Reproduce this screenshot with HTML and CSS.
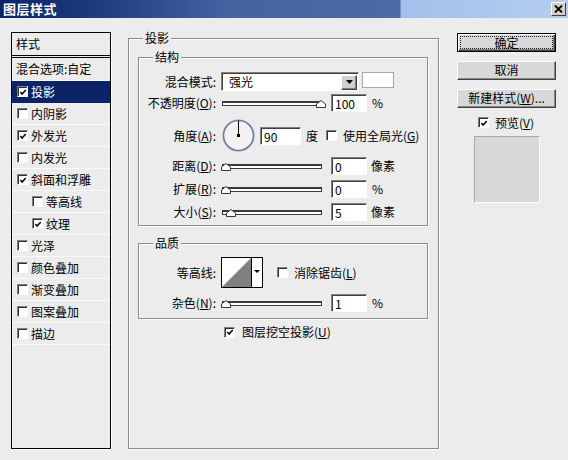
FILE: index.html
```html
<!DOCTYPE html>
<html>
<head>
<meta charset="utf-8">
<title>图层样式</title>
<link rel="stylesheet" href="styles.css">
</head>
<body>
<div class="window">
  <div class="titlebar">
    <span class="title">图层样式</span>
    <span class="close"><svg width="9" height="8" viewBox="0 0 9 8"><path d="M1 0.5 L8 7.5 M8 0.5 L1 7.5" stroke="#000" stroke-width="1.8"/></svg></span>
  </div>
  <div class="dialog">
    <div class="styles-panel">
      <div class="sp-head">样式</div>
      <div class="sp-row plain">混合选项:自定</div>
      <div class="sp-row selected"><span class="cb checked"><svg width="9" height="9" viewBox="0 0 9 9"><path d="M1.5 4 L3.5 6.2 L7.6 1.8" fill="none" stroke="#000" stroke-width="1.7"/></svg></span>投影</div>
      <div class="sp-row"><span class="cb"></span>内阴影</div>
      <div class="sp-row"><span class="cb checked"><svg width="9" height="9" viewBox="0 0 9 9"><path d="M1.5 4 L3.5 6.2 L7.6 1.8" fill="none" stroke="#000" stroke-width="1.7"/></svg></span>外发光</div>
      <div class="sp-row"><span class="cb"></span>内发光</div>
      <div class="sp-row"><span class="cb checked"><svg width="9" height="9" viewBox="0 0 9 9"><path d="M1.5 4 L3.5 6.2 L7.6 1.8" fill="none" stroke="#000" stroke-width="1.7"/></svg></span>斜面和浮雕</div>
      <div class="sp-row sub"><span class="cb"></span>等高线</div>
      <div class="sp-row sub"><span class="cb checked"><svg width="9" height="9" viewBox="0 0 9 9"><path d="M1.5 4 L3.5 6.2 L7.6 1.8" fill="none" stroke="#000" stroke-width="1.7"/></svg></span>纹理</div>
      <div class="sp-row"><span class="cb"></span>光泽</div>
      <div class="sp-row"><span class="cb"></span>颜色叠加</div>
      <div class="sp-row"><span class="cb"></span>渐变叠加</div>
      <div class="sp-row"><span class="cb"></span>图案叠加</div>
      <div class="sp-row"><span class="cb"></span>描边</div>
    </div>

    <div class="main group">
      <div class="legend outer-legend">投影</div>

      <div class="group inner">
        <div class="legend">结构</div>
        <div class="row r-blend">
          <span class="label">混合模式:</span>
          <span class="select"><span class="sel-text">强光</span><span class="drop"><svg width="7" height="4" viewBox="0 0 7 4"><path d="M0 0 H7 L3.5 4 Z" fill="#000"/></svg></span></span>
          <span class="swatch"></span>
        </div>
        <div class="row r-gap3">
          <span class="label">不透明度(<u>O</u>):</span>
          <span class="slider"><span class="track"><span class="thumb at-end"><svg width="10" height="8" viewBox="0 0 10 8"><path d="M0.5 7.5 V4 L5 0.5 L9.5 4 V7.5 Z" fill="#fff" stroke="#333"/></svg></span></span></span>
          <span class="field">100</span>
          <span class="unit">%</span>
        </div>
        <div class="row r-angle">
          <span class="label">角度(<u>A</u>):</span>
          <span class="dial"><svg width="35" height="35" viewBox="0 0 35 35"><circle cx="17.5" cy="17.5" r="16" fill="#eef0f2" stroke="#c8d0da" stroke-width="1"/><circle cx="17.5" cy="17.5" r="15" fill="#f2f2f2" stroke="#6f8096" stroke-width="1.6"/><line x1="17.5" y1="17.5" x2="17.5" y2="2.5" stroke="#000" stroke-width="1"/><rect x="16" y="16" width="3" height="3" fill="#000"/></svg></span>
          <span class="field angle-field">90</span>
          <span class="unit">度</span>
          <span class="cb global-cb"></span>
          <span class="cb-text">使用全局光(<u>G</u>)</span>
        </div>
        <div class="row r-gap4">
          <span class="label">距离(<u>D</u>):</span>
          <span class="slider"><span class="track"><span class="thumb at-start"><svg width="10" height="8" viewBox="0 0 10 8"><path d="M0.5 7.5 V4 L5 0.5 L9.5 4 V7.5 Z" fill="#fff" stroke="#333"/></svg></span></span></span>
          <span class="field">0</span>
          <span class="unit unit-px">像素</span>
        </div>
        <div class="row r-gap5">
          <span class="label">扩展(<u>R</u>):</span>
          <span class="slider"><span class="track"><span class="thumb at-start"><svg width="10" height="8" viewBox="0 0 10 8"><path d="M0.5 7.5 V4 L5 0.5 L9.5 4 V7.5 Z" fill="#fff" stroke="#333"/></svg></span></span></span>
          <span class="field">0</span>
          <span class="unit">%</span>
        </div>
        <div class="row r-gap5">
          <span class="label">大小(<u>S</u>):</span>
          <span class="slider"><span class="track"><span class="thumb at-small"><svg width="10" height="8" viewBox="0 0 10 8"><path d="M0.5 7.5 V4 L5 0.5 L9.5 4 V7.5 Z" fill="#fff" stroke="#333"/></svg></span></span></span>
          <span class="field">5</span>
          <span class="unit unit-px">像素</span>
        </div>
      </div>

      <div class="group quality">
        <div class="legend q-legend">品质</div>
        <div class="row r-contour">
          <span class="label">等高线:</span>
          <span class="contour"><svg width="42" height="31" viewBox="0 0 42 31"><rect x="0.5" y="0.5" width="41" height="30" fill="#fff" stroke="#000"/><polygon points="1,30 30,1 30,30" fill="#808080"/><line x1="30.5" y1="1" x2="30.5" y2="30" stroke="#000"/><path d="M33 13 H39 L36 16 Z" fill="#000"/></svg></span>
          <span class="cb aa-cb"></span>
          <span class="cb-text">消除锯齿(<u>L</u>)</span>
        </div>
        <div class="row r-gap6">
          <span class="label">杂色(<u>N</u>):</span>
          <span class="slider"><span class="track"><span class="thumb at-start"><svg width="10" height="8" viewBox="0 0 10 8"><path d="M0.5 7.5 V4 L5 0.5 L9.5 4 V7.5 Z" fill="#fff" stroke="#333"/></svg></span></span></span>
          <span class="field">1</span>
          <span class="unit">%</span>
        </div>
      </div>

      <div class="knockout">
        <span class="cb checked"><svg width="9" height="9" viewBox="0 0 9 9"><path d="M1.5 4 L3.5 6.2 L7.6 1.8" fill="none" stroke="#000" stroke-width="1.7"/></svg></span>
        <span class="cb-text">图层挖空投影(<u>U</u>)</span>
      </div>
    </div>

    <div class="side">
      <div class="btn default"><span class="focus">确定</span></div>
      <div class="btn">取消</div>
      <div class="btn">新建样式(<u>W</u>)...</div>
      <div class="preview-row">
        <span class="cb checked"><svg width="9" height="9" viewBox="0 0 9 9"><path d="M1.5 4 L3.5 6.2 L7.6 1.8" fill="none" stroke="#000" stroke-width="1.7"/></svg></span>
        <span class="cb-text">预览(<u>V</u>)</span>
      </div>
      <div class="preview"></div>
    </div>
  </div>
</div>
</body>
</html>
```

FILE: styles.css
```css
* { box-sizing: border-box; }
body {
  margin: 0;
  background: #ececec;
  font: 12px/14px "Noto Sans CJK SC", "Noto Sans", sans-serif;
  color: #000;
}
u { text-decoration: underline; text-underline-offset: 1px; }
.window { width: 568px; height: 460px; overflow: hidden; }

.titlebar {
  height: 18px;
  display: flex;
  align-items: center;
  justify-content: space-between;
  padding: 0 2px 0 3px;
  background: linear-gradient(to right, #0a2466 0px, #1e3a7c 90px, #4464a2 230px, #4b6ba6 400px, #a2c0ea 401px, #b4cef0 568px);
}
.title { color: #fff; font-weight: bold; font-size: 13px; letter-spacing: 0.5px; }
.close {
  width: 15px; height: 14px;
  background: #d4d0c8;
  border: 1px solid; border-color: #fff #404040 #404040 #fff;
  display: flex; align-items: center; justify-content: center;
}

.dialog { display: flex; align-items: flex-start; }

/* left list */
.styles-panel {
  margin: 14px 0 0 11px;
  width: 100px; height: 417px;
  border: 1px solid #000;
  box-shadow: 1px 1px 0 #fff;
}
.sp-head {
  height: 25px;
  padding-left: 4px;
  line-height: 21px;
  border-bottom: 3px double #000;
}
.sp-row {
  height: 22px;
  display: flex; align-items: center;
  padding-left: 5px;
  border-bottom: 1px solid #fafafa;
  white-space: nowrap;
}
.sp-row.plain { padding-left: 4px; height: 23px; }
.sp-row.sub { padding-left: 20px; }
.sp-row.selected { background: #0c2466; color: #fff; border-bottom-color: #0c2466; }
.sp-row .cb { margin-right: 3px; }

/* checkbox */
.cb {
  width: 11px; height: 11px; flex: none;
  background: #fff;
  border: 1px solid; border-color: #808080 #fff #fff #808080;
  box-shadow: inset 1px 1px 0 #303030;
  display: inline-flex; align-items: center; justify-content: center;
  padding: 1px 0 0 1px;
}
.cb svg { display: block; }

/* groups */
.group {
  border: 1px solid #8c8c8c;
  box-shadow: inset 1px 1px 0 #fff, 1px 1px 0 #fff;
}
.legend {
  width: fit-content;
  height: 14px;
  padding: 0 2px;
  background: #ececec;
  margin: -8px 0 8px 14px;
}
.main {
  margin: 20px 0 0 17px;
  width: 311px; height: 411px;
  padding: 0 10px 0 9px;
}
.outer-legend { margin: -8px 0 12px 5px; }
.inner { width: 290px; padding-bottom: 4px; }
.quality { width: 290px; margin-top: 17px; padding-bottom: 6px; }
.q-legend { margin-bottom: 7px; }

.row { display: flex; align-items: center; height: 18px; white-space: nowrap; }
.label { width: 77px; text-align: right; flex: none; margin-right: 5px; }
.r-blend { height: 19px; }
.r-gap3 { margin-top: 3px; }
.r-angle { margin-top: 6px; height: 35px; }
.r-gap4 { margin-top: 4px; }
.r-gap5 { margin-top: 5px; }
.r-gap6 { margin-top: 6px; }
.r-contour { height: 31px; }

.select {
  width: 138px; height: 19px;
  background: #fff;
  border: 1px solid; border-color: #808080 #fff #fff #808080;
  box-shadow: inset 1px 1px 0 #404040;
  display: flex; align-items: center;
  padding: 1px 1px 0 7px;
}
.sel-text { flex: 1; }
.drop {
  width: 16px; height: 15px;
  background: #d4d0c8;
  border: 1px solid; border-color: #fff #404040 #404040 #fff;
  box-shadow: inset -1px -1px 0 #808080;
  display: flex; align-items: center; justify-content: center;
}
.drop svg { display: block; }
.swatch {
  width: 32px; height: 16px;
  margin: 0 0 3px 3px;
  background: #fff;
  border: 1px solid #a8a8a8;
}

.slider { width: 100px; height: 18px; margin-left: 1px; display: flex; align-items: center; flex: none; }
.track {
  position: relative;
  width: 100px; height: 5px;
  background: #fff;
  border: 1px solid #3a3a3a;
  border-top-width: 2px;
}
.thumb { position: absolute; bottom: -3px; line-height: 0; }
.thumb.at-start { left: -2px; }
.thumb.at-small { left: 3px; }
.thumb.at-end { right: -5px; }

.field {
  width: 36px; height: 18px;
  margin-left: 9px;
  background: #fff;
  border: 1px solid; border-color: #808080 #fff #fff #808080;
  box-shadow: inset 1px 1px 0 #404040;
  padding: 2px 0 0 3px;
  line-height: 14px;
  flex: none;
}
.unit { margin-left: 5px; }
.unit-px { margin-left: 4px; }

.dial { width: 35px; height: 35px; line-height: 0; flex: none; }
.angle-field { width: 41px; margin-left: 4px; }
.global-cb { margin-left: 8px; }
.cb-text { margin-left: 6px; }

.contour { line-height: 0; flex: none; }
.aa-cb { margin-left: 14px; }

.knockout {
  display: flex; align-items: center;
  height: 14px;
  margin: 6px 0 0 86px;
}
.knockout .cb-text { margin-left: 7px; }

/* right column */
.side { margin: 15px 0 0 18px; width: 99px; }
.btn {
  height: 19px;
  margin-bottom: 9px;
  background: #d8d8d8;
  border: 1px solid; border-color: #fff #404040 #404040 #fff;
  box-shadow: inset -1px -1px 0 #8a8a8a;
  display: flex; align-items: center; justify-content: center;
  padding-bottom: 1px;
  white-space: nowrap;
}
.btn.default {
  border-color: #000;
  box-shadow: inset 1px 1px 0 #fff, inset -1px -1px 0 #404040, inset -2px -2px 0 #8a8a8a;
  padding: 2px;
}
.focus {
  width: 100%; height: 100%;
  border: 1px dotted #222;
  display: flex; align-items: center; justify-content: center;
}
.preview-row {
  display: flex; align-items: center;
  height: 13px;
  margin-top: -1px;
  padding-left: 21px;
}
.preview {
  width: 66px; height: 67px;
  margin: 7px 0 0 17px;
  background: #d8d8d8;
  border: 1px solid; border-color: #a8a8a8 #fff #fff #a8a8a8;
}
```
